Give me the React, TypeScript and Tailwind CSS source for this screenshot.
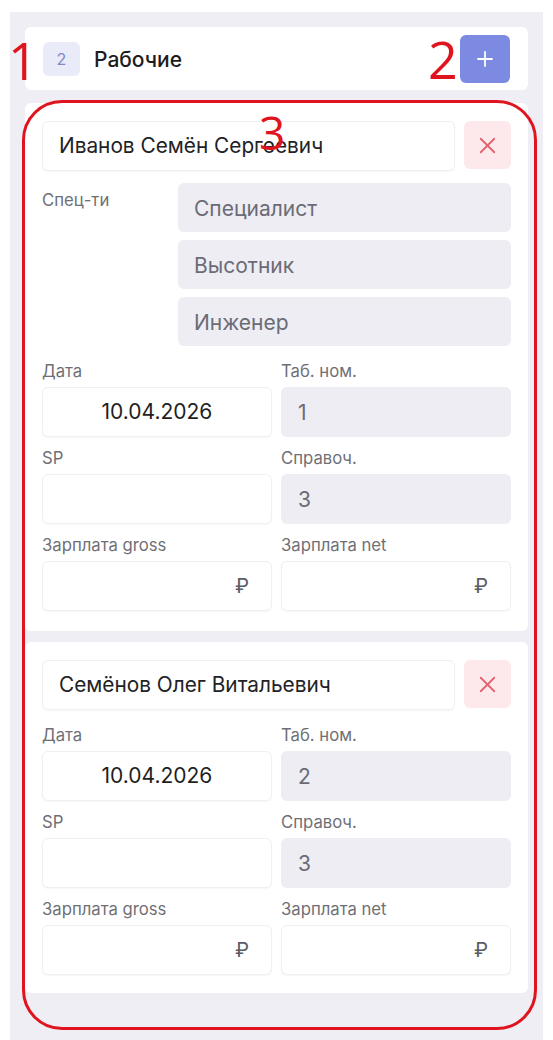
import React from 'react';
import { Plus, X } from 'lucide-react';

type Worker = {
  name: string;
  specs: string[];
  date: string;
  tab: string;
  ref: string;
};

const workers: Worker[] = [
  {
    name: 'Иванов Семён Сергеевич',
    specs: ['Специалист', 'Высотник', 'Инженер'],
    date: '10.04.2026',
    tab: '1',
    ref: '3',
  },
  {
    name: 'Семёнов Олег Витальевич',
    specs: [],
    date: '10.04.2026',
    tab: '2',
    ref: '3',
  },
];

const Label = ({ children }: { children: React.ReactNode }) => (
  <div className="text-[16.7px] leading-[20px] text-[#6f6f76] mb-[6px]">{children}</div>
);

const WhiteBox = ({ children, className = '' }: { children?: React.ReactNode; className?: string }) => (
  <div
    className={`h-[50px] rounded-md bg-white border border-[#f0f0f4] shadow-[0_1px_2px_rgba(0,0,0,0.04)] flex items-center ${className}`}
  >
    {children}
  </div>
);

const GrayBox = ({ children }: { children: React.ReactNode }) => (
  <div className="h-[50px] rounded-md bg-[#ededf3] flex items-center pl-[17px] pt-[2px] text-[21px] text-[#6b6b76]">
    {children}
  </div>
);

const Card = ({ w, first }: { w: Worker; first: boolean }) => (
  <div className={`bg-white rounded-md px-[17px] pt-[18px] ${first ? 'pb-[20px]' : 'pb-[18px]'}`}>
    <div className="flex gap-[9px]">
      <WhiteBox className="flex-1 pl-[16px] text-[20.8px] text-[#222226]">{w.name}</WhiteBox>
      <button className="w-[47px] h-[48px] rounded-md bg-[#fde9ec] flex items-center justify-center text-[#e2636d]">
        <X size={27} strokeWidth={1.6} />
      </button>
    </div>

    {w.specs.length > 0 && (
      <div className="flex mt-[12px]">
        <div className="w-[136px] pt-[7px] text-[16.7px] leading-[20px] text-[#6f6f76]">Спец-ти</div>
        <div className="flex-1 flex flex-col gap-[8px]">
          {w.specs.map((s) => (
            <div
              key={s}
              className="h-[49px] rounded-md bg-[#ededf3] flex items-center pl-[16px] pt-[2px] text-[21px] text-[#6b6b76]"
            >
              {s}
            </div>
          ))}
        </div>
      </div>
    )}

    <div className="grid grid-cols-2 gap-x-[9px] gap-y-[11px] mt-[15px]">
      <div>
        <Label>Дата</Label>
        <WhiteBox className="justify-center text-[21px] text-[#1f1f22]">{w.date}</WhiteBox>
      </div>
      <div>
        <Label>Таб. ном.</Label>
        <GrayBox>{w.tab}</GrayBox>
      </div>
      <div>
        <Label>SP</Label>
        <WhiteBox />
      </div>
      <div>
        <Label>Справоч.</Label>
        <GrayBox>{w.ref}</GrayBox>
      </div>
      <div>
        <Label>Зарплата gross</Label>
        <WhiteBox className="justify-end pr-[22px] text-[20px] text-[#5c5c63]">₽</WhiteBox>
      </div>
      <div>
        <Label>Зарплата net</Label>
        <WhiteBox className="justify-end pr-[22px] text-[20px] text-[#5c5c63]">₽</WhiteBox>
      </div>
    </div>
  </div>
);

export default function App() {
  return (
    <div className="relative bg-white h-[1040px] overflow-hidden pt-[12px] px-[10px]" style={{ fontFamily: 'Inter, "Noto Sans", sans-serif' }}>
      <div className="bg-[#eeeef4] h-[1040px] px-[15px] pt-[15px]">
        <div className="h-[63px] bg-white rounded-md flex items-center pl-[18px] pr-[18px]">
          <div className="w-[37px] h-[34px] rounded-md bg-[#e9ebf8] flex items-center justify-center text-[16px] text-[#7f89c8]">
            2
          </div>
          <div className="ml-[14px] mt-[3px] text-[21px] font-medium text-[#1c1c20]">Рабочие</div>
          <button className="ml-auto w-[50px] h-[48px] rounded-md bg-[#7d8ae2] flex items-center justify-center text-white">
            <Plus size={24} strokeWidth={1.8} />
          </button>
        </div>

        <div className="mt-[13px] flex flex-col gap-[11px]">
          {workers.map((w, i) => (
            <Card key={w.name} w={w} first={i === 0} />
          ))}
        </div>
      </div>

      {/* annotation overlay */}
      <div className="absolute left-[22px] top-[100px] w-[515px] h-[930px] border-[3px] border-[#e0141e] rounded-[40px] pointer-events-none" />
      <div
        className="absolute left-[8px] top-[30px] text-[52px] leading-[60px] text-[#e0141e]"
        style={{ fontFamily: '"Open Sans", sans-serif' }}
      >
        1
      </div>
      <div
        className="absolute left-[428px] top-[29px] text-[52px] leading-[60px] text-[#e0141e]"
        style={{ fontFamily: '"Open Sans", sans-serif' }}
      >
        2
      </div>
      <div
        className="absolute left-[259px] top-[106px] text-[46px] leading-[52px] text-[#e0141e]"
        style={{ fontFamily: '"Open Sans", sans-serif' }}
      >
        3
      </div>
    </div>
  );
}
